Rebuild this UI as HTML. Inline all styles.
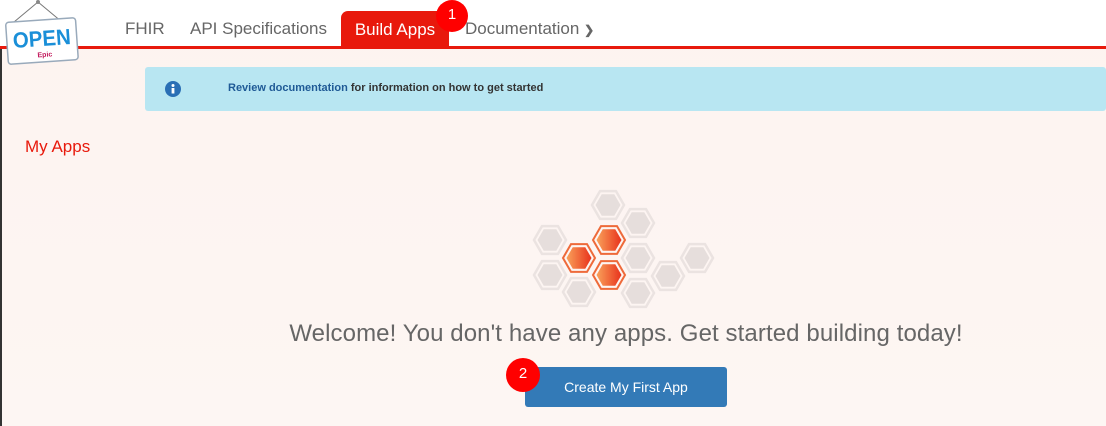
<!DOCTYPE html>
<html><head><meta charset="utf-8"><style>
*{margin:0;padding:0;box-sizing:border-box}
body{width:1106px;height:426px;overflow:hidden;font-family:"Liberation Sans",sans-serif;background:linear-gradient(180deg,#fdf3f0,#fdf6f3);position:relative}
.hdr{position:absolute;left:0;top:0;width:1106px;height:46px;background:#fff}
.line{position:absolute;left:0;top:46px;width:1106px;height:3px;background:#e8190c}
.nav{position:absolute;top:19px;font-size:17px;color:#666}
.tab{position:absolute;left:341px;top:11px;width:108px;height:36px;background:#e8190c;border-radius:7px 7px 0 0;color:#fff;font-size:17px;text-align:center;line-height:38px}
.badge{position:absolute;width:32px;height:32px;border-radius:50%;background:#f00;color:#fff;font-size:15px;text-align:center;line-height:30px}
.info{position:absolute;left:145px;top:67px;width:961px;height:44px;background:#b8e6f2;border-radius:3px;font-size:11px;font-weight:bold;color:#333}
</style></head><body>
<div style="position:absolute;left:0;top:0;width:2px;height:426px;background:#333"></div>
<div class="hdr"></div>
<div class="line"></div>
<svg style="position:absolute;left:0;top:0" width="90" height="70">
<line x1="38" y1="2" x2="14" y2="22" stroke="#777" stroke-width="1"/>
<line x1="38" y1="2" x2="62" y2="22" stroke="#777" stroke-width="1"/>
<circle cx="38" cy="2" r="2" fill="#888"/>
<g transform="rotate(-4 42 42)">
<rect x="7" y="20" width="70" height="42" rx="3" fill="#fff" stroke="#9ab" stroke-width="1.5"/>
<text x="42" y="46" text-anchor="middle" font-family="Liberation Sans" font-weight="bold" font-size="22" fill="#1a8fd8" textLength="58" lengthAdjust="spacingAndGlyphs">OPEN</text>
<text x="44" y="57" text-anchor="middle" font-family="Liberation Sans" font-weight="bold" font-size="7" fill="#c2185b">Epic</text>
</g>
</svg>
<div class="nav" style="left:125px">FHIR</div>
<div class="nav" style="left:190px">API Specifications</div>
<div class="tab">Build Apps</div>
<div class="badge" style="left:436px;top:0">1</div>
<div class="nav" style="left:465px">Documentation <span style="font-size:12px;font-weight:bold">&#10095;</span></div>
<div class="info">
<svg style="position:absolute;left:20px;top:14px" width="16" height="16"><circle cx="8" cy="8" r="8" fill="#2a6fb5"/><circle cx="8" cy="4.5" r="1.5" fill="#fff"/><rect x="6.6" y="7" width="2.8" height="5.5" fill="#fff"/></svg>
<div style="position:absolute;left:83px;top:15px"><span style="color:#1f5a96">Review documentation</span> for information on how to get started</div>
</div>
<div style="position:absolute;left:25px;top:137px;font-size:17px;color:#e8190c">My Apps</div>
<svg style="position:absolute;left:0;top:0" width="1106" height="426">
<defs>
<linearGradient id="og" x1="0" x2="1"><stop offset="0" stop-color="#f9a15a"/><stop offset="1" stop-color="#e8321c"/></linearGradient>
<g id="gh"><polygon points="16,0 8,13.86 -8,13.86 -16,0 -8,-13.86 8,-13.86" fill="none" stroke="#ebe3e1" stroke-width="2.5"/><polygon points="12.5,0 6.25,10.8 -6.25,10.8 -12.5,0 -6.25,-10.8 6.25,-10.8" fill="#e6dedc"/></g>
<g id="oh"><polygon points="16,0 8,13.86 -8,13.86 -16,0 -8,-13.86 8,-13.86" fill="none" stroke="#ee6a3a" stroke-width="2"/><polygon points="12.5,0 6.25,10.8 -6.25,10.8 -12.5,0 -6.25,-10.8 6.25,-10.8" fill="url(#og)"/></g>
</defs>
<use href="#gh" x="608" y="205"/>
<use href="#gh" x="638" y="223"/>
<use href="#gh" x="550" y="240"/>
<use href="#gh" x="638" y="258"/>
<use href="#gh" x="697" y="258"/>
<use href="#gh" x="550" y="275"/>
<use href="#gh" x="668" y="276"/>
<use href="#gh" x="579" y="292"/>
<use href="#gh" x="638" y="293"/>
<use href="#oh" x="609" y="240"/>
<use href="#oh" x="579" y="258"/>
<use href="#oh" x="609" y="275"/>
</svg>
<div style="position:absolute;left:0;width:1252px;top:320px;text-align:center;font-size:24px;color:#666;letter-spacing:0.1px">Welcome! You don't have any apps. Get started building today!</div>
<div style="position:absolute;left:525px;top:367px;width:202px;height:40px;background:#337ab7;border-radius:3px;color:#fff;font-size:14px;text-align:center;line-height:40px">Create My First App</div>
<div class="badge" style="left:506px;top:358px;width:34px;height:34px;line-height:32px">2</div>
</body></html>
